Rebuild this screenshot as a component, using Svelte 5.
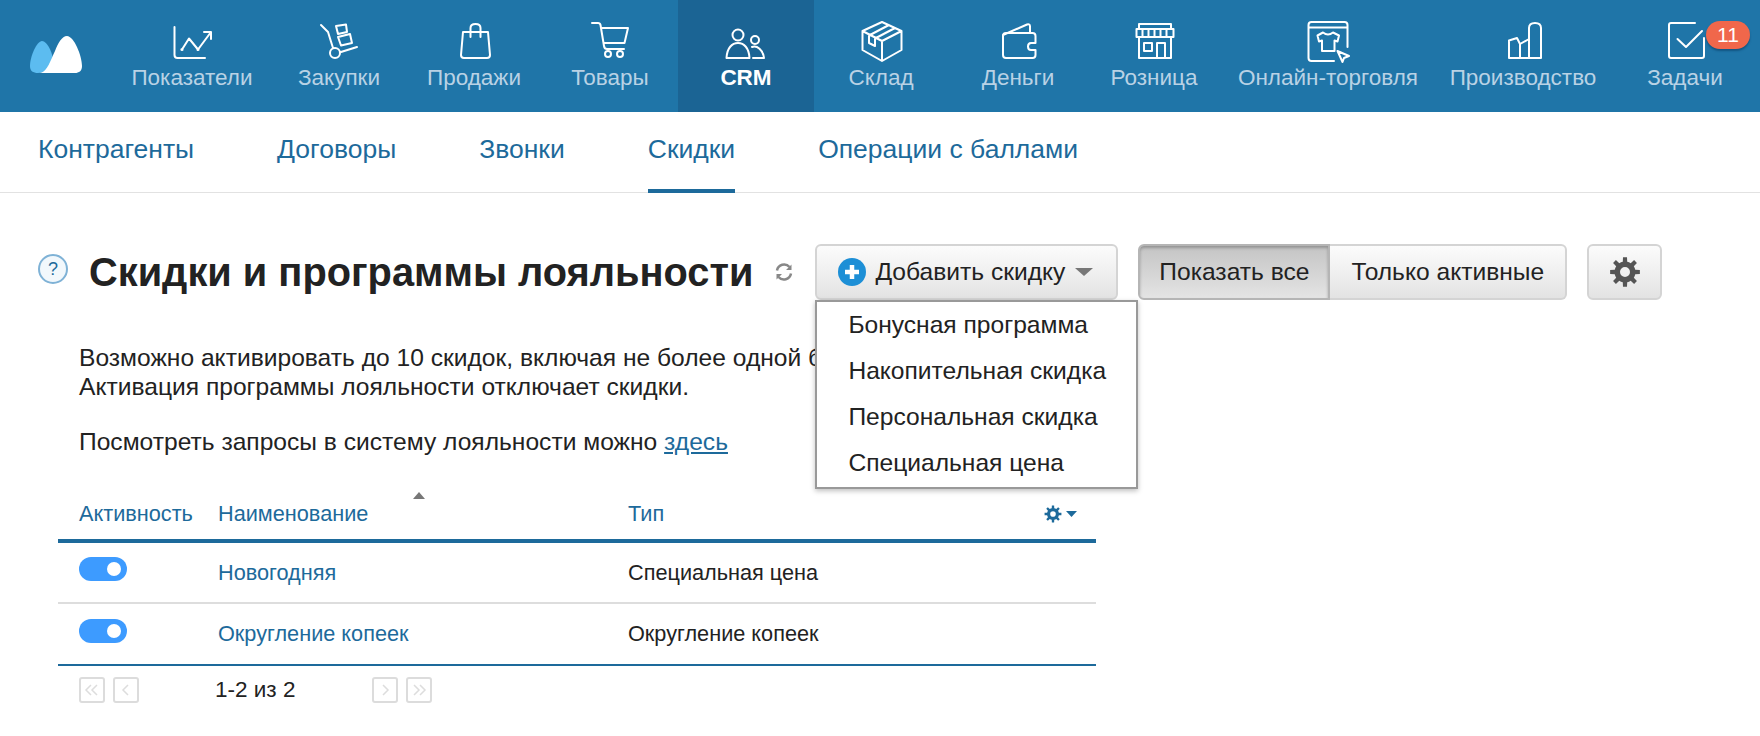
<script>
  // circle as a path fragment so each nav icon stays one string
  const ring = (x, y, r) => `M${x - r} ${y}a${r} ${r} 0 1 0 ${2 * r} 0a${r} ${r} 0 1 0 ${-2 * r} 0`;

  function gear(cx, cy, outer, inner, hole, teeth = 8) {
    let d = "";
    const step = (Math.PI * 2) / teeth;
    for (let i = 0; i < teeth; i++) {
      const a = i * step - Math.PI / 2;
      const pts = [
        [inner, a - step * 0.5],
        [inner, a - step * 0.27],
        [outer, a - step * 0.17],
        [outer, a + step * 0.17],
        [inner, a + step * 0.27]
      ];
      for (const [r, t] of pts) {
        d += `${d ? "L" : "M"}${(cx + r * Math.cos(t)).toFixed(2)} ${(cy + r * Math.sin(t)).toFixed(2)}`;
      }
    }
    return d + "Z" + ring(cx, cy, hole);
  }

  const nav = [
    { label: "Показатели", d: "M6.5 7V35q0 3 3 3H37M14 29.5L21 18.5L30 29.5L43 12M36 12H43V19" + ring(14, 29.5, 0.6) + ring(30, 29.5, 0.6) },
    { label: "Закупки", d: "M6 5L13 12L18 28M26 32L42 27M21 6L31 4.5L32 12L23 14ZM23 17L35 14L37 23L26 25.5Z" + ring(20, 33, 5) },
    { label: "Продажи", d: "M13 12H38L40 35q0 3-3 3H14q-3 0-3-3ZM20.5 17V8q0-4 5-4t5 4V17" },
    { label: "Товары", d: "M6 3H12q2 0 2.500 2L18 26q.5 3 3 3H38M15 8H42L38.500 23H18" + ring(22, 34, 3) + ring(34, 34, 3) },
    { label: "CRM", active: true, d: ring(16, 15, 5.5) + "M4.5 38C5 28 10 23 16 23C22 23 27 28 27.5 38Z" + ring(33, 20, 4) + "M30 27C35 25 41 30 42 38H31" },
    { label: "Склад", d: "M25 2L5.5 11V30L25 41L44.5 30V11ZM5.5 11L25 21L44.5 11M25 21V41M12 15.500L31 5.500M18 18.500L37 8.500M12 15.500V23L18 26V18.500" },
    { label: "Деньги", d: "M41.500 23V16q0-3-3-3H12q-3 0-3 3V35q0 3 3 3H38.500q3 0 3-3V30M41.500 23H37q-3 0-3 3.500t3 3.500H41.500M9 15L33 4.500q3-1 3 2V13" },
    { label: "Розница", d: "M9 9V4H41V9M6.500 9H43.500V17H6.500ZM12.500 9V17M18.500 9V17M24.500 9V17M30.500 9V17M36.500 9V17M9 17V38H41V17M14 23H22V31H14ZM27 38V23H35V38" },
    { label: "Онлайн-торговля", d: "M43.500 27V5q0-3-3-3H7.500q-3 0-3 3V38q0 3 3 3H30M4.500 7.500H43.500M19 12.500q5 4 10 0l6 3l-1.500 6l-3-1V31H18V20.500l-3 1l-1.500-6ZM33.500 31L45 36L40 38L38.500 42Z" },
    { label: "Производство", d: "M10 38V20.500L18 18L21 24V38M21 24L30 19M30 38V8q0-5 6-5t6 5V38M10 38H42" },
    { label: "Задачи", badge: 11, d: "M34 3H10q-2 0-2 2V36q0 2 2 2H41q2 0 2-2V18M16.500 19L25 27L41 11" }
  ];

  const tabs = ["Контрагенты", "Договоры", "Звонки", "Скидки", "Операции с баллами"];
  const addMenu = ["Бонусная программа", "Накопительная скидка", "Персональная скидка", "Специальная цена"];
  const rows = [
    { name: "Новогодняя", type: "Специальная цена" },
    { name: "Округление копеек", type: "Округление копеек" }
  ];
</script>

<div class="page">
  <header class="topbar">
    <a class="logo" href="#top" aria-label="МойСклад">
      <svg width="52" height="37" viewBox="0 0 52 37">
        <path fill="#5cbcf0" d="M0 30C0 20 7 5 12 5C17 5 23 17 23 25C20 31 15 37 8 37C3 37 0 35 0 30Z" />
        <path fill="#fff" d="M10 37C18 35 20 25 25 15C28 7 32 0 37 0C44 0 52 20 52 30C52 35 49 37 45 37Z" />
      </svg>
    </a>
    {#each nav as item}
      <a class="nav-item" class:active={item.active} href="#top">
        <svg class="nav-icon" width="48" height="44" viewBox="0 0 48 44">
          <path d={item.d} />
        </svg>
        <span>{item.label}</span>
        {#if item.badge}<b class="badge">{item.badge}</b>{/if}
      </a>
    {/each}
  </header>

  <nav class="tabs">
    {#each tabs as tab}
      <a class="tab" class:current={tab === "Скидки"} href="#top">{tab}</a>
    {/each}
  </nav>

  <main>
    <div class="title-row">
      <span class="help">?</span>
      <h1>Скидки и программы лояльности</h1>
      <svg class="refresh" width="20" height="20" viewBox="0 0 20 20">
        <path d="M3 8.500A7.200 7.200 0 0 1 15.500 5M17 11.500A7.200 7.200 0 0 1 4.500 15" />
        <path class="head" d="M17.500 2.500V8H12ZM2.500 17.500V12H8Z" />
      </svg>
      <div class="add-wrap">
        <button class="btn add">
          <svg width="28" height="28" viewBox="0 0 28 28">
            <circle cx="14" cy="14" r="14" fill="#1d8fd6" />
            <path d="M14 7V21M7 14H21" stroke="#fff" stroke-width="4.500" />
          </svg>
          Добавить скидку
          <i class="caret"></i>
        </button>
        <ul class="menu">
          {#each addMenu as entry}<li>{entry}</li>{/each}
        </ul>
      </div>
      <div class="switch">
        <button class="btn on">Показать все</button>
        <button class="btn off">Только активные</button>
      </div>
      <button class="btn cog" aria-label="Настройки">
        <svg width="32" height="32" viewBox="0 0 32 32">
          <path fill="#555" fill-rule="evenodd" d={gear(16, 16, 15, 10.500, 5)} />
        </svg>
      </button>
    </div>

    <div class="notes">
      <p>Возможно активировать до 10 скидок, включая не более одной бонусной программы.<br />Активация программы лояльности отключает скидки.</p>
      <p>Посмотреть запросы в систему лояльности можно <a href="#top">здесь</a></p>
    </div>

    <table>
      <thead>
        <tr>
          <th class="c-active">Активность</th>
          <th class="c-name">Наименование<i class="sort"></i></th>
          <th>Тип</th>
          <th class="c-tools">
            <svg width="34" height="18" viewBox="0 0 34 18">
              <path fill="#1d6a9b" fill-rule="evenodd" d={gear(9, 9, 8.500, 6, 2.800)} />
              <path fill="#1d6a9b" d="M22 6H33L27.500 12Z" />
            </svg>
          </th>
        </tr>
      </thead>
      <tbody>
        {#each rows as row}
          <tr>
            <td class="c-toggle"><span class="toggle"></span></td>
            <td><a href="#top">{row.name}</a></td>
            <td colspan="2">{row.type}</td>
          </tr>
        {/each}
      </tbody>
    </table>

    <div class="pager">
      <button aria-label="В начало"><svg viewBox="0 0 22 22"><path d="M10 6L5 11L10 16M16 6L11 11L16 16" /></svg></button>
      <button aria-label="Назад"><svg viewBox="0 0 22 22"><path d="M13 6L8 11L13 16" /></svg></button>
      <span class="count">1-2 из 2</span>
      <button aria-label="Вперёд"><svg viewBox="0 0 22 22"><path d="M9 6L14 11L9 16" /></svg></button>
      <button aria-label="В конец"><svg viewBox="0 0 22 22"><path d="M6 6L11 11L6 16M12 6L17 11L12 16" /></svg></button>
    </div>
  </main>
</div>

<style>
  :global(body) {
    margin: 0;
    background: #fff;
    font-family: "Liberation Sans", Arial, sans-serif;
    color: #222;
  }

  a {
    text-decoration: none;
  }

  .page {
    width: 1760px;
    height: 736px;
    overflow: hidden;
  }

  /* Top bar */
  .topbar {
    display: grid;
    grid-template-columns: 112px 160px 134px 136px 136px 136px 134px 140px 132px 216px 174px 150px;
    height: 112px;
    background: #1f75a8;
  }

  .logo {
    padding: 36px 0 0 30px;
  }

  .nav-item {
    position: relative;
    display: flex;
    flex-direction: column;
    align-items: center;
    padding-top: 20px;
    color: #b9d2e5;
    font-size: 22.5px;
    line-height: 26px;
    white-space: nowrap;
  }

  .nav-item.active {
    background: #1b6494;
    color: #fff;
    font-weight: bold;
  }

  .nav-icon {
    display: block;
    margin-bottom: 1px;
  }

  .nav-icon path {
    fill: none;
    stroke: #fff;
    stroke-width: 2;
    stroke-linejoin: round;
    stroke-linecap: round;
  }

  .badge {
    position: absolute;
    top: 21px;
    right: 10px;
    width: 44px;
    height: 28px;
    border-radius: 14px;
    background: #f0674b;
    box-shadow: 0 2px 2px rgba(10, 60, 100, 0.55);
    color: #fff;
    font-size: 21px;
    font-weight: normal;
    line-height: 27px;
    text-align: center;
  }

  /* Second level tabs */
  .tabs {
    display: flex;
    gap: 83px;
    height: 80px;
    padding-left: 38px;
    border-bottom: 1px solid #e2e2e2;
  }

  .tab {
    height: 77px;
    color: #1d6a9b;
    font-size: 26.5px;
    line-height: 74px;
  }

  .tab.current {
    border-bottom: 4px solid #1d6a9b;
  }

  /* Title row */
  .title-row {
    display: flex;
    align-items: center;
    height: 56px;
    margin-top: 51px;
    padding-left: 38px;
  }

  .help {
    box-sizing: border-box;
    width: 30px;
    height: 30px;
    margin-top: -6px;
    border: 2px solid #7fb2d6;
    border-radius: 50%;
    background: #f2f8fc;
    color: #1d6a9b;
    font-size: 18px;
    line-height: 26px;
    text-align: center;
  }

  h1 {
    margin: 0 21px;
    color: #222;
    font-size: 39.8px;
    font-weight: bold;
    white-space: nowrap;
  }

  .refresh {
    margin-right: 21px;
  }

  .refresh path {
    fill: none;
    stroke: #888;
    stroke-width: 2.500;
  }

  .refresh .head {
    fill: #888;
    stroke: none;
  }

  .add-wrap {
    position: relative;
  }

  .btn {
    box-sizing: border-box;
    height: 56px;
    border: 2px solid #d4d4d4;
    border-radius: 6px;
    background: linear-gradient(#fcfcfc, #e3e3e3);
    color: #222;
    font-family: inherit;
    font-size: 24.6px;
    white-space: nowrap;
  }

  .add {
    display: flex;
    align-items: center;
    gap: 9px;
    width: 303px;
    padding: 0 0 0 21px;
  }

  .caret {
    width: 0;
    height: 0;
    margin-left: 1px;
    border-top: 8px solid #777;
    border-left: 9px solid transparent;
    border-right: 9px solid transparent;
  }

  .menu {
    position: absolute;
    top: 56px;
    left: 0;
    z-index: 2;
    box-sizing: border-box;
    width: 323px;
    margin: 0;
    padding: 0 0 1px 31px;
    border: 2px solid #999;
    background: #fff;
    box-shadow: 0 2px 5px rgba(0, 0, 0, 0.25);
    list-style: none;
    font-size: 24.6px;
    line-height: 46px;
  }

  .switch {
    display: flex;
    margin-left: 20px;
  }

  .on {
    width: 192px;
    padding: 0;
    border-color: #b5b5b5;
    border-radius: 6px 0 0 6px;
    background: linear-gradient(#c4c4c4, #e4e4e4);
    box-shadow: inset 0 2px 3px rgba(0, 0, 0, 0.25);
  }

  .off {
    width: 237px;
    padding: 0;
    border-left: 0;
    border-radius: 0 6px 6px 0;
  }

  .cog {
    display: flex;
    align-items: center;
    justify-content: center;
    width: 75px;
    margin-left: 20px;
    padding: 0;
  }

  /* Notes */
  .notes {
    margin: 43px 0 0 79px;
    font-size: 24.6px;
    line-height: 29px;
    white-space: nowrap;
  }

  .notes p {
    margin: 0 0 26px;
  }

  .notes a {
    color: #1d6a9b;
    text-decoration: underline;
  }

  /* Table */
  table {
    width: 1038px;
    margin: -26px 0 0 58px;
    border-collapse: collapse;
    table-layout: fixed;
    font-size: 21.7px;
  }

  th,
  td {
    box-sizing: border-box;
  }

  th {
    position: relative;
    height: 85px;
    padding: 0 0 12px;
    border-bottom: 4px solid #1d6a9b;
    color: #1d6a9b;
    font-weight: normal;
    line-height: 26px;
    text-align: left;
    vertical-align: bottom;
  }

  .c-active {
    width: 160px;
    padding-left: 21px;
  }

  .c-name {
    width: 410px;
  }

  .c-tools {
    width: 52px;
  }

  .c-tools svg {
    display: block;
    margin-bottom: 4px;
  }

  .sort {
    position: absolute;
    top: 36px;
    left: 195px;
    border-bottom: 7px solid #777;
    border-left: 6px solid transparent;
    border-right: 6px solid transparent;
  }

  td {
    height: 62px;
    padding: 0;
    border-bottom: 2px solid #ddd;
    white-space: nowrap;
  }

  tr:last-child td {
    border-bottom-color: #1d6a9b;
  }

  td a {
    color: #1d6a9b;
  }

  .c-toggle {
    padding: 0 0 7px 21px;
  }

  .toggle {
    position: relative;
    display: block;
    width: 48px;
    height: 24px;
    border-radius: 12px;
    background: #3d9bff;
  }

  .toggle::after {
    content: "";
    position: absolute;
    top: 5px;
    right: 6px;
    width: 14px;
    height: 14px;
    border-radius: 50%;
    background: #fff;
  }

  /* Pager */
  .pager {
    display: flex;
    align-items: center;
    gap: 8px;
    margin: 11px 0 0 79px;
  }

  .pager button {
    box-sizing: border-box;
    width: 26px;
    height: 26px;
    padding: 0;
    border: 2px solid #dcdcdc;
    border-radius: 3px;
    background: #fff;
  }

  .pager svg {
    display: block;
    fill: none;
    stroke: #ddd;
    stroke-width: 1.500;
  }

  .count {
    width: 149px;
    margin-left: 68px;
    font-size: 22.5px;
  }
</style>
